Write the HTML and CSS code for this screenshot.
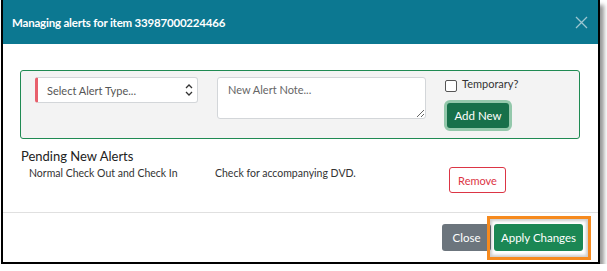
FILE: index.html
```html
<!DOCTYPE html>
<html lang="en">
  <head>
    <meta charset="utf-8" />
    <meta name="viewport" content="width=device-width, initial-scale=1.0" />
    <title>Managing alerts</title>
    <link rel="stylesheet" href="styles.css">
  </head>

  <body>
    <div class="ramme">
      <header class="hoved">
        <h1>Managing alerts for item 33987000224466</h1>
        <button class="luk" aria-label="Close">
          <svg width="13" height="13" viewBox="0 0 13 13">
            <path d="M1 1 L12 12 M12 1 L1 12" stroke="currentColor" stroke-width="1.3" fill="none" />
          </svg>
        </button>
      </header>

      <section class="indhold">
        <div class="ny-alert">
          <div class="vaelg">
            <span>Select Alert Type...</span>
            <svg width="8" height="14" viewBox="0 0 8 14">
              <path d="M1 5 L4 2 L7 5 M1 9 L4 12 L7 9" stroke="#333" stroke-width="1.3" fill="none" />
            </svg>
          </div>
          <textarea class="note" placeholder="New Alert Note..."></textarea>
          <div class="side">
            <label class="temp"><span class="boks"></span>Temporary?</label>
            <button class="tilfoej">Add New</button>
          </div>
        </div>

        <h2>Pending New Alerts</h2>
        <div class="raekke">
          <span class="type">Normal Check Out and Check In</span>
          <span class="tekst">Check for accompanying DVD.</span>
          <button class="fjern">Remove</button>
        </div>
      </section>

      <footer class="fod">
        <button class="knap graa">Close</button>
        <button class="knap groen">Apply Changes</button>
        <span class="markering"></span>
      </footer>
    </div>
  </body>
</html>
```

FILE: styles.css
```css
* {
  box-sizing: border-box;
}

body {
  margin: 0;
  background: #fff;
  font-family: Lato, "Open Sans", sans-serif;
  color: #222;
}

button {
  font-family: inherit;
}

.ramme {
  width: 599px;
  height: 264px;
  margin-left: 1px;
  border: 2px solid #000;
  border-top: 0;
  background: #fff;
  box-shadow: 4px 5px 4px rgba(0, 0, 0, 0.4);
  display: flex;
  flex-direction: column;
}

.hoved {
  height: 44px;
  background-color: #0c7891;
  display: flex;
  align-items: center;
  justify-content: space-between;
  padding: 0 10px 0 9px;
}

.hoved h1 {
  margin: 0;
  font-size: 11.5px;
  letter-spacing: -0.2px;
  font-weight: 700;
  color: #fff;
}

.luk {
  border: 0;
  background: none;
  padding: 0;
  color: #9cc6d1;
  display: flex;
}

.indhold {
  padding: 26px 18px 0 17px;
  flex: 1;
  border-bottom: 1px solid #e0e0e0;
}

.ny-alert {
  height: 69px;
  border: 1px solid #1f8a52;
  border-radius: 3px;
  background: #f3f3f3;
  display: flex;
  align-items: flex-start;
  padding: 6px 0 0 14px;
}

.vaelg {
  width: 163px;
  height: 26px;
  background: #fff;
  border: 1px solid #d3d6d9;
  border-left: 3px solid #e8606c;
  border-radius: 3px;
  display: flex;
  align-items: center;
  justify-content: space-between;
  padding: 0 4px 0 9px;
  font-size: 11px;
  color: #555;
}

.note {
  width: 209px;
  height: 42px;
  margin: 0 0 0 19px;
  border: 1px solid #d3d6d9;
  border-radius: 3px;
  padding: 5px 10px;
  font-family: inherit;
  font-size: 11px;
  resize: vertical;
}

.note::placeholder {
  color: #666;
}

.side {
  margin-left: 18px;
  display: flex;
  flex-direction: column;
  align-items: flex-start;
}

.temp {
  display: flex;
  align-items: flex-start;
  gap: 5px;
  font-size: 11px;
  color: #333;
  margin-left: 1px;
}

.boks {
  width: 12px;
  height: 12px;
  border: 1px solid #555;
  border-radius: 2px;
  background: #fff;
  margin-top: 3px;
}

.tilfoej {
  margin: 11px 0 0 3px;
  width: 62px;
  height: 25px;
  background: #17704a;
  color: #fff;
  border: 0;
  border-radius: 3px;
  box-shadow: 0 0 0 3px #93c8ab;
  font-size: 11.5px;
}

.indhold h2 {
  margin: 9px 0 0 1px;
  font-size: 13px;
  font-weight: 400;
  color: #222;
}

.raekke {
  display: flex;
  align-items: flex-start;
  padding-left: 9px;
  margin-top: 3px;
  font-size: 10.5px;
  color: #333;
}

.type {
  width: 186px;
}

.tekst {
  width: 234px;
}

.fjern {
  width: 57px;
  height: 26px;
  background: #fff;
  border: 1px solid #dc3545;
  border-radius: 3px;
  color: #dc3545;
  font-size: 11px;
}

.fod {
  height: 49px;
  display: flex;
  align-items: center;
  justify-content: flex-end;
  gap: 3px;
  padding-right: 15px;
  position: relative;
}

.knap {
  height: 27px;
  border: 0;
  border-radius: 3px;
  color: #fff;
  font-size: 11.5px;
}

.graa {
  width: 49px;
  background: #6c757d;
}

.groen {
  width: 89px;
  background: #1b8754;
}

.markering {
  position: absolute;
  right: 7px;
  top: 3px;
  width: 104px;
  height: 44px;
  border: 3px solid #f68a1e;
  box-shadow: inset 0 0 3px 2px rgba(0, 0, 0, 0.2);
}
```
